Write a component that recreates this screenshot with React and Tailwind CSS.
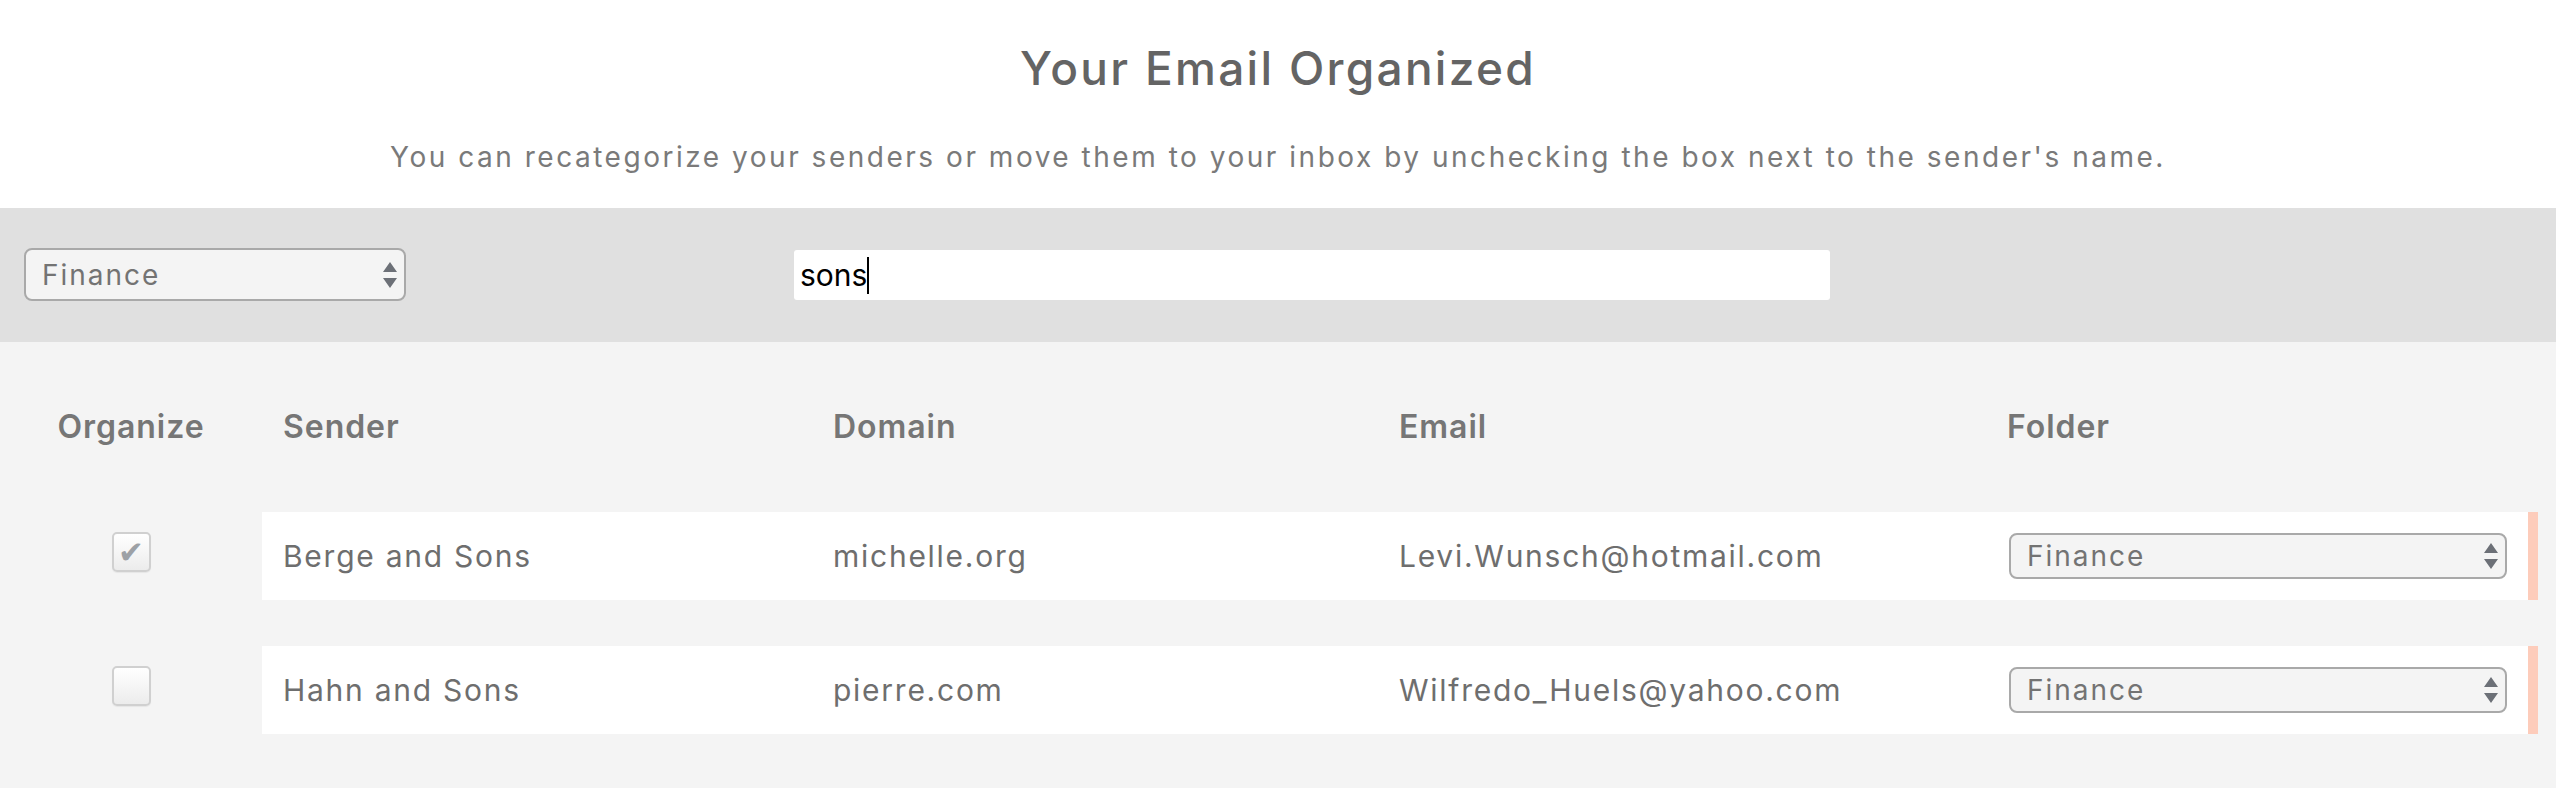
import { useState } from "react";

const senders = [
  { name: "Berge and Sons", domain: "michelle.org", email: "Levi.Wunsch@hotmail.com", folder: "Finance", organize: true },
  { name: "Hahn and Sons", domain: "pierre.com", email: "Wilfredo_Huels@yahoo.com", folder: "Finance", organize: false },
];

const folders = ["Finance", "Social", "Shopping", "Travel", "News"];

function Arrows() {
  return (
    <svg width="14" height="26" viewBox="0 0 14 26" className="pointer-events-none">
      <path d="M7 0 L14 10 H0 Z M0 16 H14 L7 26 Z" fill="#6c7077" />
    </svg>
  );
}

function FolderSelect({ value, className }) {
  return (
    <div className={`relative ${className}`}>
      <select
        defaultValue={value}
        className="appearance-none w-full h-full rounded-[8px] border-2 border-[#a9a9a9] bg-[#f4f4f4] pl-[16px] text-[28px] tracking-[0.07em] text-[#737373] outline-none"
      >
        {folders.map((f) => (
          <option key={f}>{f}</option>
        ))}
      </select>
      {/* up/down arrows sit over the select */}
      <div className="absolute right-[9px] top-1/2 -translate-y-1/2 flex">
        <Arrows />
      </div>
    </div>
  );
}

function Checkbox({ checked, onChange }) {
  return (
    <button
      onClick={onChange}
      className="w-[39px] h-[40px] rounded-[5px] border-2 border-[#d0d0d0] bg-linear-to-b from-white to-[#ececec] shadow-[0_1px_1px_rgba(0,0,0,0.06)] flex items-center justify-center"
    >
      {checked && (
        <span className="font-['DejaVu_Sans',sans-serif] text-[31px] leading-none text-[#9da1a6]">✔</span>
      )}
    </button>
  );
}

export default function App() {
  const [rows, setRows] = useState(senders);

  const toggle = (i) => {
    setRows(rows.map((r, j) => (j === i ? { ...r, organize: !r.organize } : r)));
  };

  return (
    <div className="min-h-screen bg-[#f4f4f4] font-[Inter,sans-serif]">
      {/* Heading */}
      <div className="bg-white h-[208px] flex flex-col items-center">
        <h1 className="mt-[45px] text-[46px] leading-[46px] font-medium tracking-[0.05em] text-[#646464]">
          Your Email Organized
        </h1>
        <p className="mt-[52px] text-[28px] leading-[28px] tracking-[0.09em] text-[#7a7a7a]">
          You can recategorize your senders or move them to your inbox by unchecking the box next to the sender's name.
        </p>
      </div>

      {/* Filter bar */}
      <div className="bg-[#e0e0e0] h-[134px] flex items-start">
        <FolderSelect value="Finance" className="ml-[24px] mt-[40px] w-[382px] h-[53px]" />
        <div className="ml-[388px] mt-[42px] w-[1036px] h-[50px] bg-white rounded-[3px] flex items-center pl-[6px]">
          <span className="text-[30px] text-black">sons</span>
          <span className="w-[2px] h-[37px] bg-black" />
        </div>
      </div>

      {/* Table */}
      <div>
        <div className="h-[170px] flex items-center text-[32px] font-semibold tracking-[0.03em] text-[#767676]">
          <div className="w-[262px] text-center">Organize</div>
          <div className="w-[550px] pl-[21px]">Sender</div>
          <div className="w-[566px] pl-[21px]">Domain</div>
          <div className="w-[608px] pl-[21px]">Email</div>
          <div className="w-[542px] pl-[21px]">Folder</div>
        </div>

        <div className="flex flex-col gap-[46px]">
          {rows.map((r, i) => (
            <div key={r.email} className="flex h-[88px]">
              <div className="w-[262px] flex items-center justify-center pb-[8px]">
                <Checkbox checked={r.organize} onChange={() => toggle(i)} />
              </div>
              <div className="w-[2266px] bg-white flex items-center text-[30px] tracking-[0.058em] text-[#6e6e6e]">
                <div className="w-[550px] pl-[21px]">{r.name}</div>
                <div className="w-[566px] pl-[21px]">{r.domain}</div>
                <div className="w-[608px] pl-[21px]">{r.email}</div>
                <div className="w-[542px] pl-[23px] pr-[21px]">
                  <FolderSelect value={r.folder} className="w-full h-[46px]" />
                </div>
              </div>
              <div className="w-[10px] bg-[#fdccbb]" />
            </div>
          ))}
        </div>
      </div>
    </div>
  );
}
